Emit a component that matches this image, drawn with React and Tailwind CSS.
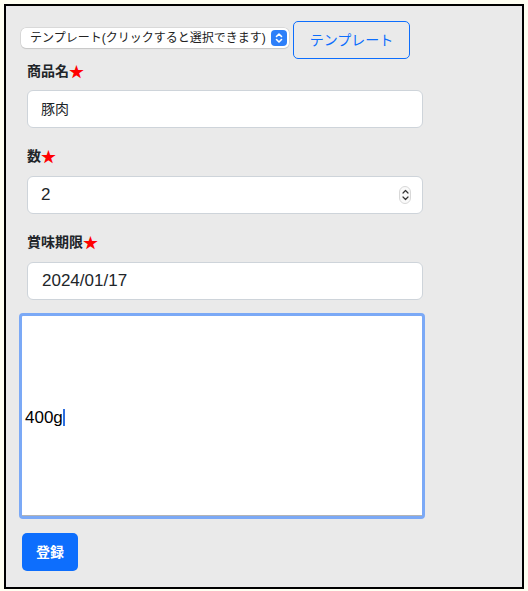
import React from 'react';

const font = { fontFamily: '"Liberation Sans", "Noto Sans CJK JP", sans-serif' };

function Label({ children }) {
  return (
    <div className="h-[20px] flex items-center text-[14px] font-bold text-[#212529] leading-none">
      {children}
      <span className="text-[#ff0000] text-[15px]">★</span>
    </div>
  );
}

function Field({ children, extra }) {
  return (
    <div className="w-[396px] h-[38px] bg-white border border-[#ced4da] rounded-[6px] flex items-center pl-[13px] pr-[15px] text-[#212529]">
      <div className="flex-1">{children}</div>
      {extra}
    </div>
  );
}

export default function App() {
  return (
    <div className="w-[528px] h-[591px] bg-[#fffff2] pt-[4px] pl-[4px]" style={font}>
      <div className="w-[520px] h-[585px] border-2 border-black bg-[#eaeaea] pl-[15px] pt-[15px]">
        <div className="flex items-start">
          <div className="mt-[7px] w-[268px] h-[20px] bg-white rounded-[5px] shadow-[0_0_0_0.5px_#c8c8c8,0_1px_1px_rgba(0,0,0,0.15)] flex items-center pl-[9px] pr-[2px] text-[12px] text-[#222]">
            <span className="flex-1 whitespace-nowrap">テンプレート(クリックすると選択できます)</span>
            <span className="w-[16px] h-[16px] rounded-[4px] bg-[#2d7ff9] flex items-center justify-center">
              <svg width="8" height="12" viewBox="0 0 8 12" fill="none" stroke="white" strokeWidth="1.6" strokeLinecap="round" strokeLinejoin="round">
                <path d="M1.5 4.5 4 2l2.5 2.5" />
                <path d="M1.5 7.5 4 10l2.5-2.5" />
              </svg>
            </span>
          </div>
          <button className="ml-[4px] w-[117px] h-[38px] border border-[#0d6efd] rounded-[5px] text-[#0d6efd] text-[14px] flex items-center justify-center">
            テンプレート
          </button>
        </div>

        <div className="pl-[6px]">
          <div className="mt-[2px]"><Label>商品名</Label></div>
          <div className="mt-[9px]">
            <Field><span className="text-[14px]">豚肉</span></Field>
          </div>

          <div className="mt-[18px]"><Label>数</Label></div>
          <div className="mt-[10px]">
            <Field
              extra={
                <span className="w-[12px] h-[18px] rounded-full border border-[#d8d8d8] bg-[#fafafa] flex flex-col items-center justify-center gap-[2px] -mr-[4px]">
                  <svg width="7" height="5" viewBox="0 0 7 5" fill="none" stroke="#333" strokeWidth="1.2" strokeLinecap="round" strokeLinejoin="round">
                    <path d="M1 4 3.5 1.5 6 4" />
                  </svg>
                  <svg width="7" height="5" viewBox="0 0 7 5" fill="none" stroke="#333" strokeWidth="1.2" strokeLinecap="round" strokeLinejoin="round">
                    <path d="M1 1 3.5 3.5 6 1" />
                  </svg>
                </span>
              }
            >
              <span className="text-[17px]">2</span>
            </Field>
          </div>

          <div className="mt-[18px]"><Label>賞味期限</Label></div>
          <div className="mt-[10px]">
            <Field><span className="text-[17px] pl-[1px]">2024/01/17</span></Field>
          </div>
        </div>

        <div className="mt-[13px] -ml-[2px] w-[406px] h-[206px] rounded-[4px] border-[3px] border-[#7ba9f6] bg-white">
          <div className="w-full h-full border-b border-[#b4b4b4] flex items-center pl-[3px] pt-[4px]">
            <span className="text-[17px] text-black leading-none">400g</span>
            <span className="w-[2px] h-[17px] bg-[#2e6fe0]"></span>
          </div>
        </div>

        <button className="mt-[14px] ml-[1px] w-[56px] h-[38px] bg-[#0d6efd] rounded-[5px] text-white text-[14px] font-bold flex items-center justify-center">
          登録
        </button>
      </div>
    </div>
  );
}
